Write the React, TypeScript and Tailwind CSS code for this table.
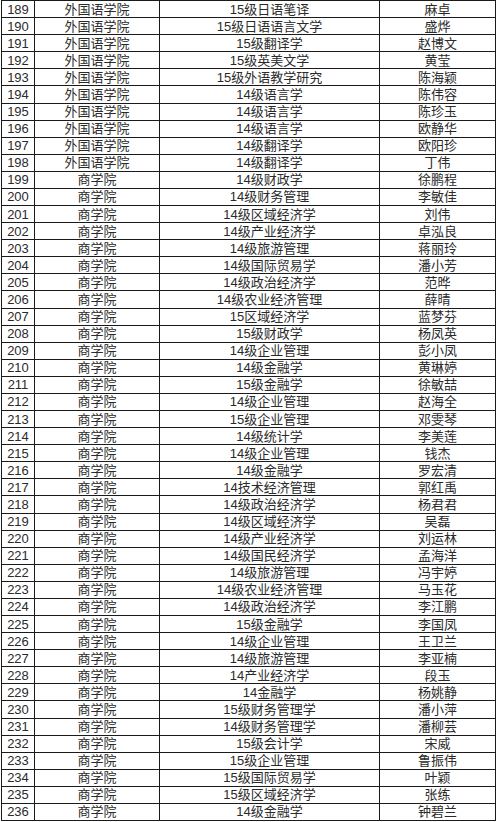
import React from "react";

const raw = `189 外国语学院 15级日语笔译 麻卓
190 外国语学院 15级日语语言文学 盛烨
191 外国语学院 15级翻译学 赵博文
192 外国语学院 15级英美文学 黄莹
193 外国语学院 15级外语教学研究 陈海颖
194 外国语学院 14级语言学 陈伟容
195 外国语学院 14级语言学 陈珍玉
196 外国语学院 14级语言学 欧静华
197 外国语学院 14级翻译学 欧阳珍
198 外国语学院 14级翻译学 丁伟
199 商学院 14级财政学 徐鹏程
200 商学院 14级财务管理 李敏佳
201 商学院 14级区域经济学 刘伟
202 商学院 14级产业经济学 卓泓良
203 商学院 14级旅游管理 蒋丽玲
204 商学院 14级国际贸易学 潘小芳
205 商学院 14级政治经济学 范晔
206 商学院 14级农业经济管理 薛晴
207 商学院 15区域经济学 蓝梦芬
208 商学院 15级财政学 杨凤英
209 商学院 14级企业管理 彭小凤
210 商学院 14级金融学 黄琳婷
211 商学院 15级金融学 徐敏喆
212 商学院 14级企业管理 赵海全
213 商学院 15级企业管理 邓雯琴
214 商学院 14级统计学 李美莲
215 商学院 14级企业管理 钱杰
216 商学院 14级金融学 罗宏清
217 商学院 14技术经济管理 郭红禹
218 商学院 14级政治经济学 杨君君
219 商学院 14级区域经济学 吴磊
220 商学院 14级产业经济学 刘运林
221 商学院 14级国民经济学 孟海洋
222 商学院 14级旅游管理 冯宇婷
223 商学院 14级农业经济管理 马玉花
224 商学院 14级政治经济学 李江鹏
225 商学院 15级金融学 李国凤
226 商学院 14级企业管理 王卫兰
227 商学院 14级旅游管理 李亚楠
228 商学院 14产业经济学 段玉
229 商学院 14金融学 杨姚静
230 商学院 15级财务管理学 潘小萍
231 商学院 14级财务管理学 潘柳芸
232 商学院 15级会计学 宋威
233 商学院 15级企业管理 鲁振伟
234 商学院 15级国际贸易学 叶颖
235 商学院 15级区域经济学 张练
236 商学院 14级金融学 钟碧兰`;

const rows = raw.split("\n").map((l) => l.split(" "));

export default function App() {
  return (
    <div className="w-[500px] h-[822px] bg-white pt-[0px] pl-[1px]">
      <div
        className="grid w-[495px] h-[821px] grid-cols-[33px_125px_220px_116px] grid-rows-[repeat(48,1fr)] border-t border-l border-[#1a1a1a] text-[13px] leading-none text-[#2a2a2a]"
        style={{ fontFamily: '"Liberation Sans", "Noto Sans CJK SC", sans-serif' }}
      >
        {rows.map((r, i) => (
          <React.Fragment key={i}>
            {r.map((c, j) => (
              <div
                key={j}
                className="flex items-center justify-center border-r border-b border-[#1a1a1a] overflow-hidden whitespace-nowrap"
              >
                {c}
              </div>
            ))}
          </React.Fragment>
        ))}
      </div>
    </div>
  );
}
